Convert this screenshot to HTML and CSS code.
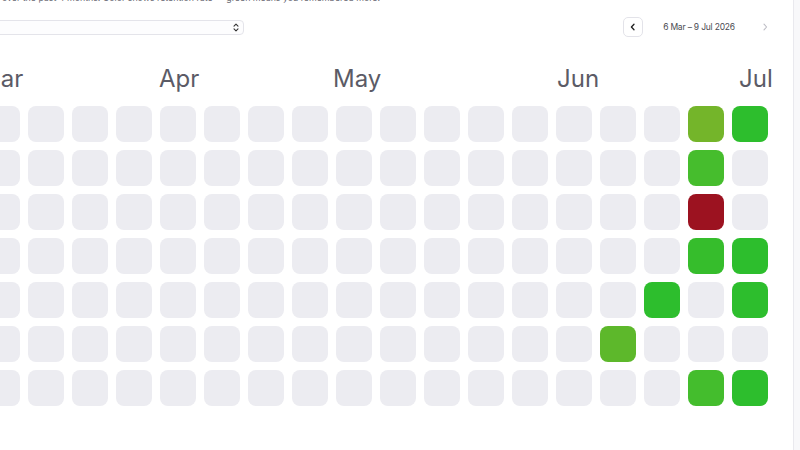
FILE: index.html
```html
<!DOCTYPE html>
<html lang="en">
<head>
    <meta charset="UTF-8">
    <meta name="viewport" content="width=device-width, initial-scale=1.0">
    <title>Review heatmap</title>
    <link rel="stylesheet" href="styles.css">
</head>
<body>
    <div class="viewport">
        <div class="content">
            <p class="desc">Your review activity over the past 4 months. Color shows retention rate — green means you remembered more.</p>
            <div class="toolbar">
                <div class="select">
                    <span class="selectText">All decks</span>
                    <svg class="updown" width="6" height="9" viewBox="0 0 6 9"><path d="M1 3.2 3 1.2 5 3.2M1 5.8 3 7.8 5 5.8" fill="none" stroke="#333" stroke-width="1.1" stroke-linecap="round" stroke-linejoin="round"/></svg>
                </div>
                <div class="range">
                    <a href="javascript:" class="navBtn prev"><svg width="8" height="8" viewBox="0 0 8 8"><path d="M5 1.2 2.4 4 5 6.8" fill="none" stroke="#222" stroke-width="1.3" stroke-linecap="round" stroke-linejoin="round"/></svg></a>
                    <span class="rangeText">6 Mar – 9 Jul 2026</span>
                    <a href="javascript:" class="navBtn next"><svg width="8" height="8" viewBox="0 0 8 8"><path d="M3 1.2 5.6 4 3 6.8" fill="none" stroke="#bcbcc4" stroke-width="1.1" stroke-linecap="round" stroke-linejoin="round"/></svg></a>
                </div>
            </div>
            <div class="months" id="months"></div>
            <div class="grid" id="grid"></div>
        </div>
    </div>
    <div class="rail"></div>
    <script>
        var grid = document.getElementById("grid");
        var months = document.getElementById("months");

        // 19 weeks, 7 days each. Only days with reviews get a colour.
        var cols = 19;
        var filled = {
            "17-0": "#74b52a", "18-0": "#2dbe2d",
            "17-1": "#46bd2d",
            "17-2": "#9c1220",
            "17-3": "#36bd2c", "18-3": "#2dbe2d",
            "16-4": "#2dbe2d", "18-4": "#2dbe2d",
            "15-5": "#5db82b",
            "17-6": "#44bd2d", "18-6": "#2dbe2d"
        };

        for (var r = 0; r < 7; r++) {
            for (var c = 0; c < cols; c++) {
                var cell = document.createElement("span");
                cell.className = "cell";
                var color = filled[c + "-" + r];
                if (color) {
                    cell.style.background = color;
                }
                grid.appendChild(cell);
            }
        }

        // month label: grid column it starts in, and a small shift
        var labels = [["Mar", 2, -5], ["Apr", 6, -1], ["May", 10, -3], ["Jun", 15, 1], ["Jul", 19, 7]];
        for (var i = 0; i < labels.length; i++) {
            var m = document.createElement("span");
            m.className = "month";
            m.textContent = labels[i][0];
            m.style.gridColumn = labels[i][1];
            m.style.marginLeft = labels[i][2] + "px";
            months.appendChild(m);
        }
    </script>
</body>
</html>
```

FILE: styles.css
```css
*{
    margin: 0;
    padding: 0;
    box-sizing: border-box;
}
body{
    width: 800px;
    height: 450px;
    display: flex;
    overflow: hidden;
    background: #fff;
    font-family: Inter, "Noto Sans", sans-serif;
    color: #2a2a33;
}
.viewport{
    flex: 1;
    overflow: hidden;
}
.content{
    width: 850px;
    margin-left: -60px;
    margin-top: -9px;
}
.rail{
    width: 7px;
    background: #f8f8fa;
    border-left: 1px solid #e9e9ee;
}
.desc{
    font-size: 8.8px;
    line-height: 14px;
    color: #6b6b75;
    white-space: nowrap;
    margin-left: -22px;
}
.toolbar{
    width: 835px;
    display: flex;
    justify-content: space-between;
    align-items: center;
    margin-top: 12px;
    height: 20px;
}
.select{
    width: 300px;
    height: 15px;
    margin-left: 4px;
    border: 1px solid #e4e4ea;
    border-radius: 4px;
    background: #fdfdfe;
    display: flex;
    align-items: center;
    justify-content: space-between;
    padding: 0 4px 0 8px;
}
.selectText{
    font-size: 9px;
    color: #333;
}
.range{
    display: flex;
    align-items: center;
}
.navBtn{
    width: 20px;
    height: 20px;
    border-radius: 5px;
    display: flex;
    align-items: center;
    justify-content: center;
}
.navBtn.prev{
    border: 1px solid #e3e3e9;
    background: #fff;
}
.rangeText{
    font-size: 8.5px;
    color: #4a4a52;
    width: 112px;
    text-align: center;
    letter-spacing: -0.2px;
}
.months{
    display: grid;
    grid-template-columns: repeat(19, 36px);
    column-gap: 8px;
    margin-top: 28px;
    height: 28px;
}
.month{
    grid-row: 1;
    font-size: 24px;
    line-height: 28px;
    color: #5b5b66;
    white-space: nowrap;
}
.grid{
    display: grid;
    grid-template-columns: repeat(19, 36px);
    grid-auto-rows: 36px;
    gap: 8px;
    margin-top: 13px;
}
.cell{
    background: #ececf1;
    border-radius: 8px;
}
```
